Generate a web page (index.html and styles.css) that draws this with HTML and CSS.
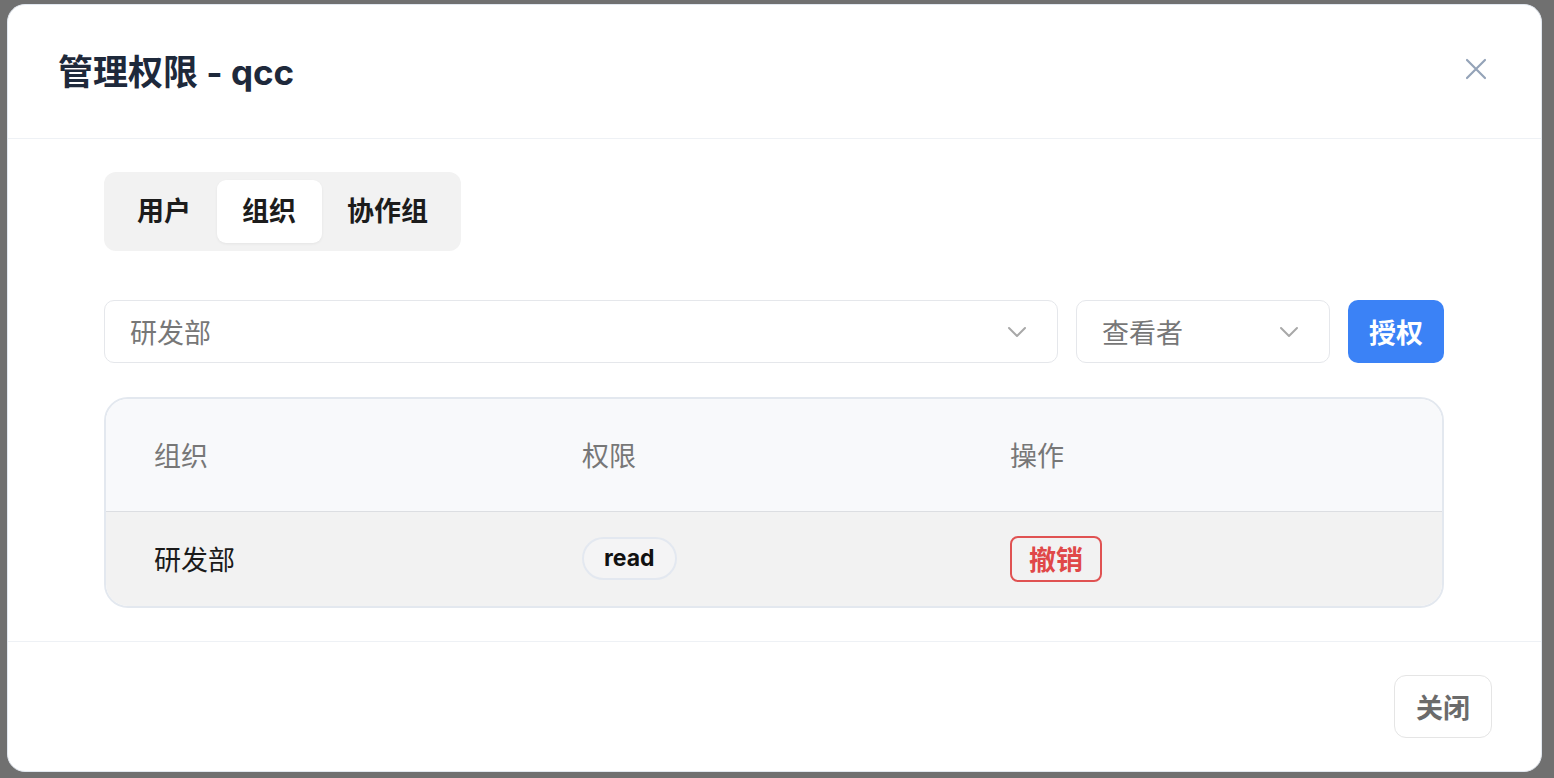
FILE: index.html
```html
<!DOCTYPE html>
<html lang="zh-CN">
  <head>
    <meta charset="UTF-8" />
    <meta name="viewport" content="width=device-width, initial-scale=1.0" />
    <title>管理权限</title>
    <link rel="stylesheet" href="styles.css">
  </head>
  <body>
    <div class="modal">
      <div class="modal-head">
        <h1>管理权限 - qcc</h1>
        <button class="close-x" aria-label="close">
          <svg width="22" height="22" viewBox="0 0 22 22"><path d="M2 2 L20 20 M20 2 L2 20" stroke="#94a3b8" stroke-width="2.2" stroke-linecap="round" fill="none"/></svg>
        </button>
      </div>
      <div class="modal-body">
        <div class="tabs">
          <div class="tab">用户</div>
          <div class="tab active">组织</div>
          <div class="tab">协作组</div>
        </div>
        <div class="grant-row">
          <div class="select wide">
            <span>研发部</span>
            <svg width="20" height="12" viewBox="0 0 20 12"><polyline points="2,2 10,10 18,2" stroke="#a8a8a8" stroke-width="2" fill="none" stroke-linecap="round" stroke-linejoin="round"/></svg>
          </div>
          <div class="select role">
            <span>查看者</span>
            <svg width="20" height="12" viewBox="0 0 20 12"><polyline points="2,2 10,10 18,2" stroke="#a8a8a8" stroke-width="2" fill="none" stroke-linecap="round" stroke-linejoin="round"/></svg>
          </div>
          <button class="btn-primary">授权</button>
        </div>
        <div class="table-wrap">
          <table>
            <thead>
              <tr>
                <th class="c1">组织</th>
                <th class="c2">权限</th>
                <th>操作</th>
              </tr>
            </thead>
            <tbody>
              <tr>
                <td>研发部</td>
                <td><span class="badge">read</span></td>
                <td><button class="btn-revoke">撤销</button></td>
              </tr>
            </tbody>
          </table>
        </div>
      </div>
      <div class="modal-foot">
        <button class="btn-close">关闭</button>
      </div>
    </div>
  </body>
</html>
```
FILE: styles.css
```css
* {
  margin: 0;
  padding: 0;
  box-sizing: border-box;
  font-family: "Inter", "Noto Sans CJK SC", sans-serif;
}
body {
  background: #707070;
  padding: 4px 0 0 7px;
  height: 778px;
  overflow: hidden;
}
button {
  font-family: inherit;
  cursor: pointer;
}
.modal {
  width: 1535px;
  height: 768px;
  background: #fff;
  border: 1px solid #e2e8f0;
  border-radius: 18px;
  display: flex;
  flex-direction: column;
  overflow: hidden;
}
.modal-head {
  height: 134px;
  display: flex;
  align-items: center;
  justify-content: space-between;
  padding: 0 54px 5px 50px;
  border-bottom: 1px solid #eef1f5;
}
.modal-head h1 {
  font-size: 35px;
  font-weight: 700;
  color: #1e293b;
}
.close-x {
  background: none;
  border: none;
  display: flex;
}
.modal-body {
  flex: 1;
  padding: 33px 97px 0 96px;
}
.tabs {
  display: inline-flex;
  background: #f2f2f2;
  border-radius: 12px;
  padding: 8px 7px 8px 8px;
  height: 79px;
}
.tab {
  height: 63px;
  line-height: 63px;
  padding: 0 26px 0 25px;
  font-size: 27px;
  font-weight: 700;
  color: #1c1c1c;
  border-radius: 9px;
}
.tab.active {
  background: #fff;
  box-shadow: 0 1px 3px rgba(0, 0, 0, 0.06);
}
.grant-row {
  display: flex;
  gap: 18px;
  margin-top: 49px;
  height: 63px;
}
.select {
  display: flex;
  align-items: center;
  justify-content: space-between;
  border: 1px solid #e5e7eb;
  border-radius: 10px;
  padding: 0 30px 0 25px;
  font-size: 27px;
  color: #777;
}
.select.wide {
  width: 954px;
}
.select.role {
  width: 254px;
}
.btn-primary {
  width: 96px;
  background: #3b82f6;
  color: #fff;
  border: none;
  border-radius: 10px;
  font-size: 27px;
  font-weight: 700;
}
.table-wrap {
  margin-top: 34px;
  border: 2px solid #e3e8ef;
  border-radius: 24px;
  overflow: hidden;
}
table {
  width: 100%;
  border-collapse: collapse;
}
th {
  background: #f8f9fb;
  height: 112px;
  text-align: left;
  font-weight: 400;
  font-size: 27px;
  color: #777;
  padding-left: 48px;
  border-bottom: 1px solid #dcdee2;
}
th.c1,
th.c2 {
  width: 428px;
}
td {
  background: #f2f2f2;
  height: 95px;
  padding-left: 48px;
  font-size: 27px;
  color: #1a1a1a;
}
.badge {
  display: inline-block;
  height: 43px;
  line-height: 39px;
  padding: 0 20px;
  border: 2px solid #e3e8f0;
  border-radius: 22px;
  font-size: 23px;
  font-weight: 700;
  color: #111;
  background: #f4f4f5;
}
.btn-revoke {
  height: 46px;
  padding: 0 17px;
  background: none;
  border: 2px solid #e05252;
  border-radius: 8px;
  color: #e04848;
  font-size: 27px;
  font-weight: 700;
}
.modal-foot {
  height: 130px;
  border-top: 1px solid #eef1f5;
  display: flex;
  align-items: center;
  justify-content: flex-end;
  padding-right: 49px;
}
.btn-close {
  width: 98px;
  height: 63px;
  background: #fff;
  border: 1px solid #e5e5e5;
  border-radius: 12px;
  font-size: 27px;
  font-weight: 700;
  color: #6b6b6b;
}
```
